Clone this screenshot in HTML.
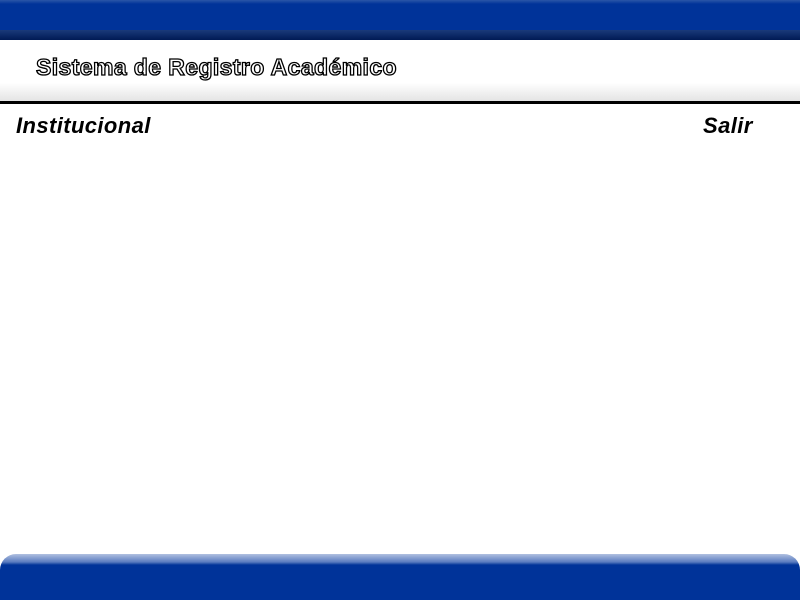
<!DOCTYPE html>
<html><head><style>
body{margin:0;width:800px;height:600px;background:#fff;position:relative;overflow:hidden;font-family:"Liberation Sans",sans-serif}
.top{position:absolute;left:0;top:0;width:800px;height:30px;background:linear-gradient(#2a56a8,#003399 4px,#003399)}
.dark{position:absolute;left:0;top:30px;width:800px;height:10px;background:linear-gradient(#1a3a7a,#001a55)}
.shade{position:absolute;left:0;top:40px;width:800px;height:61px;background:linear-gradient(#fff 0,#fff 70%,#e4e4e4 100%)}
.line{position:absolute;left:0;top:101px;width:800px;height:3px;background:#000}
.title{position:absolute;left:36px;top:54px;font-size:23px;font-weight:bold;color:#fff;-webkit-text-stroke:1.3px #000;letter-spacing:0.4px;white-space:nowrap}
.nav{position:absolute;top:113px;font-size:22px;font-weight:bold;font-style:italic;color:#000;letter-spacing:0.4px}
.bot{position:absolute;left:0;top:554px;width:800px;height:46px;border-radius:16px 16px 0 0;background:linear-gradient(#b0c0e0 0,#5a7cc0 8px,#003399 11px,#003399)}
</style></head><body>
<div class="top"></div><div class="dark"></div><div class="shade"></div><div class="line"></div>
<div class="title">Sistema de Registro Académico</div>
<div class="nav" style="left:16px">Institucional</div>
<div class="nav" style="left:703px">Salir</div>
<div class="bot"></div>
</body></html>
